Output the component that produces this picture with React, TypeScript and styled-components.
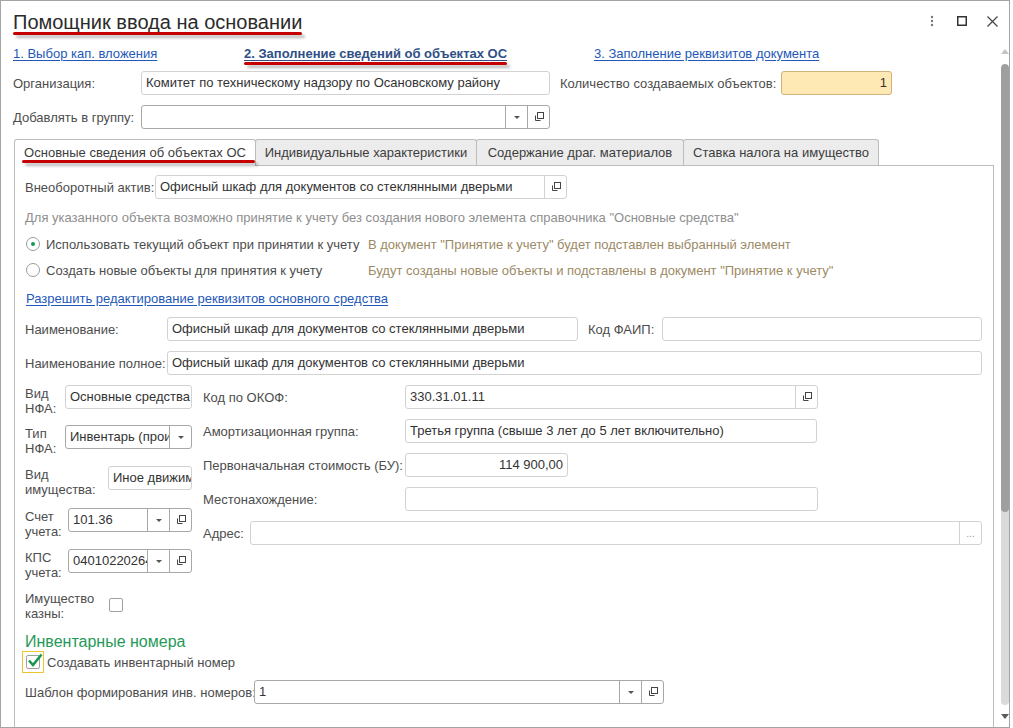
import styled, { createGlobalStyle } from 'styled-components';

const GlobalStyle = createGlobalStyle`
  html, body { margin: 0; padding: 0; background: #fff; }
  body {
    font-family: "Liberation Sans", Arial, sans-serif;
    font-size: 13px;
    color: #4d4d4d;
  }
  * { box-sizing: border-box; }
`;

const Window = styled.div`
  width: 1010px;
  height: 728px;
  border: 1px solid #a4a4a4;
  background: #fff;
  display: flex;
  flex-direction: column;
  overflow: hidden;
`;

const TitleBar = styled.div`
  height: 40px;
  flex-shrink: 0;
  display: flex;
  align-items: center;
  justify-content: space-between;
  padding: 0 2px 0 12px;
`;

const Title = styled.div`
  position: relative;
  font-size: 20px;
  line-height: 24px;
  color: #2b2b2b;
  margin-top: 2px;
`;

// red annotation stroke drawn over the screenshot
const Marker = styled.span<{ $top: number }>`
  position: absolute;
  left: 0;
  right: 0;
  top: ${p => p.$top}px;
  height: 3px;
  border-radius: 2px;
  background: #c40000;
  box-shadow: 3px 3px 3px rgba(0, 0, 0, 0.28);
  pointer-events: none;
`;

const HeaderButtons = styled.div`
  display: flex;
  align-items: center;
`;

const HeaderButton = styled.div`
  width: 30px;
  height: 24px;
  display: flex;
  align-items: center;
  justify-content: center;
`;

const Body = styled.div`
  flex: 1;
  display: flex;
  min-height: 0;
`;

const Main = styled.div`
  flex: 1;
  padding-left: 12px;
  overflow: hidden;
`;

const ScrollColumn = styled.div`
  width: 12px;
  padding: 8px 0 8px 4px;
  display: flex;
  flex-direction: column;
  align-items: center;
`;

const ScrollArrow = styled.div<{ $down?: boolean }>`
  width: 0;
  height: 0;
  border-left: 4px solid transparent;
  border-right: 4px solid transparent;
  ${p => p.$down
    ? 'border-top: 5px solid #5a5a5a; margin-top: 9px;'
    : 'border-bottom: 5px solid #c4c4c4; margin-bottom: 10px;'}
`;

const ScrollTrack = styled.div`
  flex: 1;
  width: 8px;
  border-radius: 4px;
  background: #dadada;
  overflow: hidden;
`;

const ScrollThumb = styled.div<{ $h: number }>`
  height: ${p => p.$h}px;
  border-radius: 4px;
  background: #9f9f9f;
`;

const StepsRow = styled.div`
  height: 24px;
  display: flex;
  align-items: center;
`;

const StepCell = styled.div<{ $w?: number }>`
  width: ${p => (p.$w ? `${p.$w}px` : 'auto')};
  flex-shrink: 0;
`;

const StepLink = styled.span<{ $active?: boolean }>`
  position: relative;
  color: ${p => (p.$active ? '#2f4f86' : '#2458b8')};
  font-weight: ${p => (p.$active ? 'bold' : 'normal')};
  text-decoration: underline;
  text-underline-offset: 2px;
  cursor: pointer;
`;

const FormRow = styled.div<{ $mt?: number }>`
  display: flex;
  align-items: center;
  height: 24px;
  margin-top: ${p => p.$mt ?? 0}px;
`;

const Label = styled.div<{ $w: number; $pl?: number }>`
  width: ${p => p.$w}px;
  padding-left: ${p => p.$pl ?? 0}px;
  flex-shrink: 0;
  white-space: nowrap;
  color: #4d4d4d;
`;

const Field = styled.div<{ $w: number; $strong?: boolean; $bg?: string; $border?: string }>`
  width: ${p => p.$w}px;
  height: 24px;
  flex-shrink: 0;
  display: flex;
  border: 1px solid ${p => p.$border ?? (p.$strong ? '#a8a8a8' : '#d2d2d2')};
  border-radius: 3px;
  background: ${p => p.$bg ?? '#fff'};
  overflow: hidden;
`;

const FieldValue = styled.div<{ $align?: string }>`
  flex: 1;
  min-width: 0;
  padding: 0 4px;
  line-height: 22px;
  color: #333;
  white-space: nowrap;
  overflow: hidden;
  text-align: ${p => p.$align ?? 'left'};
`;

const FieldButton = styled.div<{ $strong?: boolean }>`
  width: 22px;
  flex-shrink: 0;
  display: flex;
  align-items: center;
  justify-content: center;
  border-left: 1px solid ${p => (p.$strong ? '#a8a8a8' : '#d2d2d2')};
  color: #999;
  font-size: 10px;
`;

const DropArrow = styled.span`
  width: 0;
  height: 0;
  border-left: 3px solid transparent;
  border-right: 3px solid transparent;
  border-top: 3px solid #555;
`;

const Tabs = styled.div`
  display: flex;
  height: 26px;
  margin: 10px 0 0 1px;
`;

const Tab = styled.div<{ $w: number; $active?: boolean }>`
  position: relative;
  z-index: ${p => (p.$active ? 1 : 0)};
  width: ${p => p.$w}px;
  height: ${p => (p.$active ? 27 : 26)}px;
  margin-left: -1px;
  &:first-child { margin-left: 0; }
  border: 1px solid #bcbcbc;
  border-bottom: none;
  border-radius: 3px 3px 0 0;
  background: ${p => (p.$active ? '#fff' : '#ececec')};
  color: #3d3d3d;
  line-height: 25px;
  text-align: center;
  white-space: nowrap;
`;

const TabCaption = styled.span`
  position: relative;
`;

const Panel = styled.div`
  width: 980px;
  height: 620px;
  margin-left: 1px;
  border: 1px solid #bcbcbc;
  padding: 9px 11px 0 10px;
`;

const TextRow = styled.div<{ $mt?: number; $color?: string }>`
  display: flex;
  align-items: center;
  height: 20px;
  margin-top: ${p => p.$mt ?? 0}px;
  color: ${p => p.$color ?? '#4d4d4d'};
  white-space: nowrap;
`;

const RadioOption = styled.div`
  width: 343px;
  display: flex;
  align-items: center;
  flex-shrink: 0;
`;

const Radio = styled.span<{ $checked?: boolean }>`
  width: 14px;
  height: 14px;
  margin: 0 6px 0 1px;
  border: 1px solid #9c9c9c;
  border-radius: 50%;
  background: #fff;
  display: flex;
  align-items: center;
  justify-content: center;
  &::after {
    content: '';
    display: ${p => (p.$checked ? 'block' : 'none')};
    width: 4px;
    height: 4px;
    border-radius: 50%;
    background: #169a52;
  }
`;

const Hint = styled.span`
  color: #9c8a66;
`;

const ActionLink = styled.span`
  margin-left: 1px;
  color: #2458b8;
  text-decoration: underline;
  text-underline-offset: 2px;
`;

const Columns = styled.div`
  display: flex;
  gap: 11px;
  margin-top: 10px;
`;

const LeftCol = styled.div`
  width: 167px;
  flex-shrink: 0;
  display: flex;
  flex-direction: column;
`;

const LeftRow = styled.div<{ $mt?: number }>`
  display: flex;
  align-items: flex-start;
  margin-top: ${p => p.$mt ?? 0}px;
`;

const StackLabel = styled.div<{ $w: number }>`
  width: ${p => p.$w}px;
  flex-shrink: 0;
  line-height: 15px;
  padding-top: 1px;
  color: #4d4d4d;
`;

const RightCol = styled.div`
  flex: 1;
  display: flex;
  flex-direction: column;
  gap: 10px;
`;

const CheckBox = styled.span<{ $mt?: number }>`
  width: 14px;
  height: 14px;
  margin-top: ${p => p.$mt ?? 0}px;
  border: 1px solid #a0a0a0;
  border-radius: 2px;
  background: #fff;
  display: flex;
  align-items: center;
  justify-content: center;
  overflow: visible;
`;

const SectionTitle = styled.div`
  margin-top: 11px;
  font-size: 16px;
  line-height: 19px;
  color: #1f9a58;
`;

const CheckRow = styled.div`
  display: flex;
  align-items: center;
  height: 22px;
  margin-left: -3px;
`;

const FocusFrame = styled.span`
  width: 22px;
  height: 22px;
  border: 1px solid #efc431;
  display: flex;
  align-items: center;
  justify-content: center;
  margin-right: 3px;
`;

const CheckMark = styled.svg`
  flex-shrink: 0;
  margin: -4px -3px 0 0;
`;

function OpenIcon() {
  return (
    <svg width="11" height="11" viewBox="0 0 11 11">
      <rect x="4.5" y="0.5" width="6" height="6" fill="none" stroke="#444" />
      <path d="M2.5 3.5 V8.5 H7.5" fill="none" stroke="#444" />
    </svg>
  );
}

function Input({ w, value, align, strong, drop, open, dots, bg, border }: {
  w: number; value?: string; align?: string; strong?: boolean;
  drop?: boolean; open?: boolean; dots?: boolean; bg?: string; border?: string;
}) {
  return (
    <Field $w={w} $strong={strong} $bg={bg} $border={border}>
      <FieldValue $align={align}>{value}</FieldValue>
      {drop && <FieldButton $strong={strong}><DropArrow /></FieldButton>}
      {open && <FieldButton $strong={strong}><OpenIcon /></FieldButton>}
      {dots && <FieldButton $strong={strong}>...</FieldButton>}
    </Field>
  );
}

const tabs = [
  { title: 'Основные сведения об объектах ОС', w: 242 },
  { title: 'Индивидуальные характеристики', w: 222 },
  { title: 'Содержание драг. материалов', w: 208 },
  { title: 'Ставка налога на имущество', w: 196 },
];

const asset = 'Офисный шкаф для документов со стеклянными дверьми';

export default function App() {
  return <>
    <GlobalStyle />
    <Window>
      <TitleBar>
        <Title>
          Помощник ввода на основании
          <Marker $top={22} />
        </Title>
        <HeaderButtons>
          <HeaderButton>
            <svg width="4" height="12" viewBox="0 0 4 12">
              <circle cx="2" cy="2" r="1.2" fill="#777" />
              <circle cx="2" cy="6" r="1.2" fill="#777" />
              <circle cx="2" cy="10" r="1.2" fill="#777" />
            </svg>
          </HeaderButton>
          <HeaderButton>
            <svg width="10" height="10" viewBox="0 0 10 10">
              <rect x="0.75" y="0.75" width="8.5" height="8.5" fill="none" stroke="#333" strokeWidth="1.5" />
            </svg>
          </HeaderButton>
          <HeaderButton>
            <svg width="11" height="11" viewBox="0 0 11 11">
              <path d="M0.5 0.5 L10.5 10.5 M10.5 0.5 L0.5 10.5" stroke="#444" strokeWidth="1.2" />
            </svg>
          </HeaderButton>
        </HeaderButtons>
      </TitleBar>
      <Body>
        <Main>
          <StepsRow>
            <StepCell $w={231}><StepLink>1. Выбор кап. вложения</StepLink></StepCell>
            <StepCell $w={350}>
              <StepLink $active>
                2. Заполнение сведений об объектах ОС
                <Marker $top={16} />
              </StepLink>
            </StepCell>
            <StepCell><StepLink>3. Заполнение реквизитов документа</StepLink></StepCell>
          </StepsRow>

          <FormRow $mt={6}>
            <Label $w={128}>Организация:</Label>
            <Input w={409} value="Комитет по техническому надзору по Осановскому району" />
            <Label $w={231} $pl={10}>Количество создаваемых объектов:</Label>
            <Input w={111} value="1" align="right" bg="#fee8b4" border="#d0b27c" />
          </FormRow>

          <FormRow $mt={10}>
            <Label $w={128}>Добавлять в группу:</Label>
            <Input w={409} strong drop open />
          </FormRow>

          <Tabs>
            {tabs.map((t, i) => (
              <Tab key={t.title} $w={t.w} $active={i === 0}>
                <TabCaption>
                  {t.title}
                  {i === 0 && <Marker $top={15} style={{ left: -2, right: -9 }} />}
                </TabCaption>
              </Tab>
            ))}
          </Tabs>

          <Panel>
            <FormRow>
              <Label $w={130}>Внеоборотный актив:</Label>
              <Input w={412} value={asset} open />
            </FormRow>

            <TextRow $mt={8} $color="#8e8e8e">
              Для указанного объекта возможно принятие к учету без создания нового элемента справочника "Основные средства"
            </TextRow>

            <TextRow $mt={7}>
              <RadioOption><Radio $checked />Использовать текущий объект при принятии к учету</RadioOption>
              <Hint>В документ "Принятие к учету" будет подставлен выбранный элемент</Hint>
            </TextRow>
            <TextRow $mt={6}>
              <RadioOption><Radio />Создать новые объекты для принятия к учету</RadioOption>
              <Hint>Будут созданы новые объекты и подставлены в документ "Принятие к учету"</Hint>
            </TextRow>

            <TextRow $mt={8}>
              <ActionLink>Разрешить редактирование реквизитов основного средства</ActionLink>
            </TextRow>

            <FormRow $mt={9}>
              <Label $w={142}>Наименование:</Label>
              <Input w={411} value={asset} />
              <Label $w={84} $pl={10}>Код ФАИП:</Label>
              <Input w={320} />
            </FormRow>

            <FormRow $mt={10}>
              <Label $w={142}>Наименование полное:</Label>
              <Input w={815} value={asset} />
            </FormRow>

            <Columns>
              <LeftCol>
                <LeftRow>
                  <StackLabel $w={40}>Вид НФА:</StackLabel>
                  <Input w={127} value="Основные средства" />
                </LeftRow>
                <LeftRow $mt={9}>
                  <StackLabel $w={40}>Тип НФА:</StackLabel>
                  <Input w={127} value="Инвентарь (производственный и хозяйственный)" strong drop />
                </LeftRow>
                <LeftRow $mt={10}>
                  <StackLabel $w={83}>Вид имущества:</StackLabel>
                  <Input w={84} value="Иное движимое имущество" />
                </LeftRow>
                <LeftRow $mt={11}>
                  <StackLabel $w={43}>Счет учета:</StackLabel>
                  <Input w={124} value="101.36" strong drop open />
                </LeftRow>
                <LeftRow $mt={10}>
                  <StackLabel $w={43}>КПС учета:</StackLabel>
                  <Input w={124} value="04010220264" strong drop open />
                </LeftRow>
                <LeftRow $mt={10}>
                  <StackLabel $w={84}>Имущество казны:</StackLabel>
                  <CheckBox $mt={8} />
                </LeftRow>
              </LeftCol>

              <RightCol>
                <FormRow>
                  <Label $w={202}>Код по ОКОФ:</Label>
                  <Input w={413} value="330.31.01.11" open />
                </FormRow>
                <FormRow>
                  <Label $w={202}>Амортизационная группа:</Label>
                  <Input w={412} value="Третья группа (свыше 3 лет до 5 лет включительно)" />
                </FormRow>
                <FormRow>
                  <Label $w={202}>Первоначальная стоимость (БУ):</Label>
                  <Input w={163} value="114 900,00" align="right" />
                </FormRow>
                <FormRow>
                  <Label $w={202}>Местонахождение:</Label>
                  <Input w={413} />
                </FormRow>
                <FormRow>
                  <Label $w={47}>Адрес:</Label>
                  <Input w={732} dots />
                </FormRow>
              </RightCol>
            </Columns>

            <SectionTitle>Инвентарные номера</SectionTitle>
            <CheckRow>
              <FocusFrame>
                <CheckBox>
                  <CheckMark width="16" height="15" viewBox="0 0 16 15">
                    <path d="M2 7.5 L6 12 L14.5 1.5" fill="none" stroke="#1a9650" strokeWidth="2.6" />
                  </CheckMark>
                </CheckBox>
              </FocusFrame>
              Создавать инвентарный номер
            </CheckRow>

            <FormRow $mt={7}>
              <Label $w={229}>Шаблон формирования инв. номеров:</Label>
              <Input w={410} value="1" strong drop open />
            </FormRow>
          </Panel>
        </Main>
        <ScrollColumn>
          <ScrollArrow />
          <ScrollTrack>
            <ScrollThumb $h={448} />
          </ScrollTrack>
          <ScrollArrow $down />
        </ScrollColumn>
      </Body>
    </Window>
  </>;
}
